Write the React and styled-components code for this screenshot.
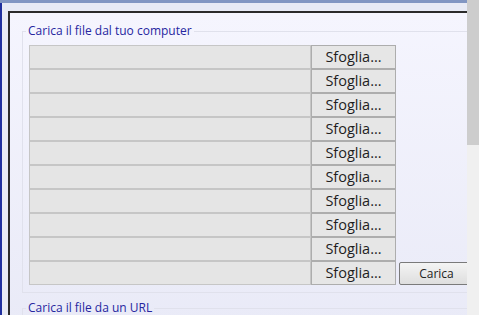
import styled, { createGlobalStyle } from "styled-components";

const GlobalStyle = createGlobalStyle`
  html, body {
    margin: 0;
    padding: 0;
    background: #e7eaf5;
    font-family: "Open Sans", "Noto Sans", sans-serif;
  }
`;

const Page = styled.div`
  display: flex;
  width: 479px;
  height: 315px;
  overflow: hidden;
`;

const Main = styled.div`
  flex: 1;
  min-width: 0;
  display: flex;
  flex-direction: column;
  border-top: 3px solid #8196c2;
  background: #e7eaf5;
  overflow: hidden;
`;

const Frame = styled.div`
  flex: 1;
  display: flex;
  border-left: 2px solid #1f2f9e;
  padding: 8px 0 0 6px;
`;

const Panel = styled.div`
  flex: 1;
  border-top: 2px solid #2b2b2b;
  border-left: 2px solid #2b2b2b;
  background: linear-gradient(#f5f5fe, #e9eaf7);
  padding: 11px 0 0 12px;
  overflow: hidden;
`;

const Group = styled.fieldset`
  margin: ${(p) => (p.$first ? "0" : "8px")} -20px 0 0;
  padding: 7px 6px 7px 6px;
  border: 1px solid #e0e1ec;
  min-width: 0;
`;

const Legend = styled.legend`
  padding: 0 2px;
  margin-left: -3px;
  font-size: 12px;
  line-height: 14px;
  color: #2626a0;
`;

const Row = styled.div`
  display: flex;
  align-items: flex-end;

  & > * {
    flex-shrink: 0;
  }
`;

const FileBox = styled.div`
  box-sizing: border-box;
  width: 282px;
  height: 24px;
  border: 1px solid #c6c6c6;
  background: #e5e5e5;
`;

const Browse = styled.button`
  box-sizing: border-box;
  width: 85px;
  height: 24px;
  margin: 0;
  padding: 0 0 1px;
  border: 1px solid #adadad;
  background: #e6e6e6;
  font-family: inherit;
  font-size: 14.5px;
  color: #1e1e1e;
`;

const Upload = styled.button`
  box-sizing: border-box;
  width: 75px;
  height: 23px;
  margin: 0 0 0 3px;
  padding: 0;
  border: 1px solid #7a7a7a;
  border-radius: 2px;
  background: linear-gradient(#f4f4f4, #dedede);
  font-family: inherit;
  font-size: 12px;
  color: #222;
`;

const Scrollbar = styled.div`
  width: 12px;
  background: #f0f0f0;
`;

const Thumb = styled.div`
  height: 145px;
  background: #cdcdcd;
`;

const rows = Array.from({ length: 10 }, (_, i) => i);

export default function App() {
  return (
    <>
      <GlobalStyle />
      <Page>
        <Main>
          <Frame>
            <Panel>
              <Group $first>
                <Legend>Carica il file dal tuo computer</Legend>
                {rows.map((i) => (
                  <Row key={i}>
                    <FileBox />
                    <Browse>Sfoglia...</Browse>
                    {i === rows.length - 1 && <Upload>Carica</Upload>}
                  </Row>
                ))}
              </Group>
              <Group>
                <Legend>Carica il file da un URL</Legend>
              </Group>
            </Panel>
          </Frame>
        </Main>
        <Scrollbar>
          <Thumb />
        </Scrollbar>
      </Page>
    </>
  );
}
